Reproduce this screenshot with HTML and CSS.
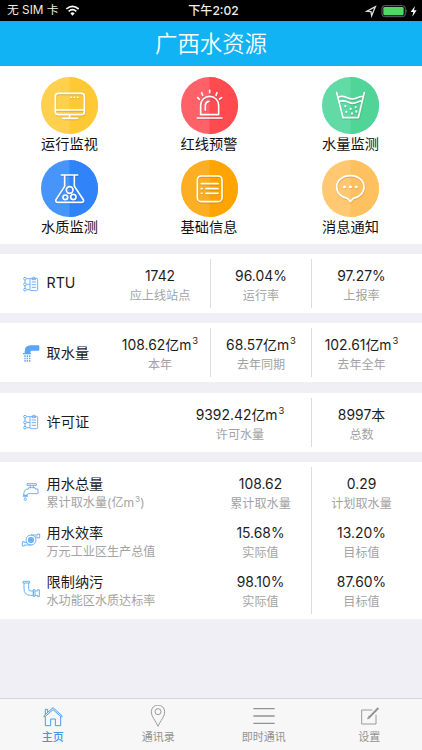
FILE: index.html
```html
<!DOCTYPE html>
<html lang="zh-CN">
<head>
<meta charset="utf-8">
<title>广西水资源</title>
<link rel="stylesheet" href="styles.css">
</head>
<body>
<svg class="defs" width="0" height="0">
  <symbol id="board" viewBox="0 0 54 54">
    <rect x="24" y="10" width="23" height="37" rx="3"/>
    <path d="M30 10q5-8 11 0v4H30zM29 21h13M29 29h13M29 37h13M14 11h10M14 28h10M14 44h10M9 15v9M9 32v8"/>
    <circle cx="9" cy="11" r="4"/><circle cx="9" cy="28" r="4"/><circle cx="9" cy="44" r="4"/>
  </symbol>
</svg>
<header class="status">
  <span class="carrier">无 SIM 卡
    <svg class="wifi" viewBox="0 0 45 33"><path d="M4 12Q22 -4 41 12M11 19Q22 9 34 19" /><path class="solid" d="M16 25Q22 19 29 25L22.500 32z"/></svg>
  </span>
  <span class="time">下午2:02</span>
  <span class="power">
    <svg viewBox="0 0 160 42"><path class="arrow" d="M5 22L31 8L20 35L18 23z"/><rect class="shell" x="51" y="5" width="70" height="33" rx="8"/><rect class="charge" x="55" y="9" width="61" height="25" rx="4"/><path class="tip" d="M124 16q5 5 0 11z"/><path class="bolt" d="M150 6L137 24h8l-3 14 13-19h-8z"/></svg>
  </span>
</header>
<h1 class="title">广西水资源</h1>

<nav class="menu">
  <a class="item"><svg class="disc yellow" viewBox="0 0 171 171"><circle cx="85.500" cy="85.500" r="85.500"/><path class="half" d="M85.500 0a85.500 85.500 0 0 1 0 171z"/>
    <g class="line"><rect x="43" y="49" width="87" height="64" rx="9"/><path d="M43 99h87M86 113v11M65 124h44"/><path class="dots" d="M90 61h1M100 61h1M110 61h1"/></g></svg>运行监视</a>
  <a class="item"><svg class="disc red" viewBox="0 0 171 171"><circle cx="85.500" cy="85.500" r="85.500"/><path class="half" d="M85.500 0a85.500 85.500 0 0 1 0 171z"/>
    <g class="line"><path d="M59 113V85a27 27 0 0 1 54 0v28zM49 123h74M50 62l5 5M62 47l3 8M86 40v7M108 47l-3 8M122 62l-6 4"/><path d="M73 100V86q0-11 11-13"/></g></svg>红线预警</a>
  <a class="item"><svg class="disc green" viewBox="0 0 171 171"><circle cx="85.500" cy="85.500" r="85.500"/><path class="half" d="M85.500 0a85.500 85.500 0 0 1 0 171z"/>
    <g class="line"><path d="M44 47l19 75h46l18-75M48 61c19-10 25 5 43 5 16 0 20-10 32-7M51 74c17-8 25 3 39 5 14 1 20-8 29-7"/><path class="thin" d="M70 87v1M86 95v1M101 90v1M73 104v1M90 109v1M103 103v1"/></g></svg>水量监测</a>
  <a class="item"><svg class="disc blue" viewBox="0 0 171 171"><circle cx="85.500" cy="85.500" r="85.500"/><path class="half" d="M85.500 0a85.500 85.500 0 0 1 0 171z"/>
    <g class="line"><path d="M61 45h49M71 47v32L45 119q-3 8 6 8h70q9 0 6-8L100 79V47"/><circle cx="86" cy="90" r="10"/><circle cx="73" cy="112" r="7"/><circle cx="97" cy="111" r="8"/></g></svg>水质监测</a>
  <a class="item"><svg class="disc orange" viewBox="0 0 171 171"><circle cx="85.500" cy="85.500" r="85.500"/><path class="half" d="M85.500 0a85.500 85.500 0 0 1 0 171z"/>
    <g class="line"><rect x="49" y="48" width="74" height="77" rx="12"/><path d="M61 71h50M75 86h36M75 100h36M61 86h2M61 100h2"/></g></svg>基础信息</a>
  <a class="item"><svg class="disc peach" viewBox="0 0 171 171"><circle cx="85.500" cy="85.500" r="85.500"/><path class="half" d="M85.500 0a85.500 85.500 0 0 1 0 171z"/>
    <g class="line"><path d="M76 115C57 112 44 98 44 81c0-19 18-34 41-34s41 15 41 34c0 17-13 31-32 34l-9 10z"/><path class="bold" d="M67 81h1M85 81h1M102 81h1"/></g></svg>消息通知</a>
</nav>

<main class="cards">
  <section class="card">
    <div class="row three">
      <div class="name"><svg><use href="#board"/></svg><b>RTU</b></div>
      <div class="cell"><b>1742</b><i>应上线站点</i></div>
      <div class="cell"><b>96.04%</b><i>运行率</i></div>
      <div class="cell"><b>97.27%</b><i>上报率</i></div>
    </div>
  </section>
  <section class="card">
    <div class="row three">
      <div class="name"><svg viewBox="0 0 54 54"><path class="fill" d="M8 23q0-19 19-19h23q2 0 2 2v12q0 2-3 2H29q-4 0-4 4v3h2v4H3v-4h5z"/><path class="drops" d="M9 34v20M16 34v20M23 34v20"/></svg><b>取水量</b></div>
      <div class="cell"><b>108.62亿m<sup>3</sup></b><i>本年</i></div>
      <div class="cell"><b>68.57亿m<sup>3</sup></b><i>去年同期</i></div>
      <div class="cell"><b>102.61亿m<sup>3</sup></b><i>去年全年</i></div>
    </div>
  </section>
  <section class="card">
    <div class="row two">
      <div class="name"><svg><use href="#board"/></svg><b>许可证</b></div>
      <div class="cell"><b>9392.42亿m<sup>3</sup></b><i>许可水量</i></div>
      <div class="cell"><b>8997本</b><i>总数</i></div>
    </div>
  </section>
  <section class="card">
    <div class="row two wide">
      <div class="name"><svg viewBox="0 0 54 54"><path d="M15 5h28v5H15zM25 10v7M34 10v7M20 17h19v4h9v14H25q-9-2-10 5H5q0-20 15-19zM4 40h12v4H4zM10 47q-7 8 0 8t0-8"/></svg><span><b>用水总量</b><i>累计取水量(亿m<sup>3</sup>)</i></span></div>
      <div class="cell"><b>108.62</b><i>累计取水量</i></div>
      <div class="cell"><b>0.29</b><i>计划取水量</i></div>
    </div>
    <div class="row two wide">
      <div class="name"><svg viewBox="0 0 54 54"><circle cx="27" cy="27" r="15"/><circle class="hub" cx="27" cy="27" r="8"/><path d="M20 21l14 12M34 21L20 33M27 18v18M18 27h18M27 12h20V9h6v12h-6v-3h-8M27 42H7v3H1V32h6v3h9"/></svg><span><b>用水效率</b><i>万元工业区生产总值</i></span></div>
      <div class="cell"><b>15.68%</b><i>实际值</i></div>
      <div class="cell"><b>13.20%</b><i>目标值</i></div>
    </div>
    <div class="row two wide">
      <div class="name"><svg viewBox="0 0 54 54"><path d="M3 4h20v5H3zM6 9v17q0 20 20 20h8V33h-7q-7 0-7-7V9M34 29h5v20h-5zM39 33h8v-4h5v21h-5v-4h-8"/></svg><span><b>限制纳污</b><i>水功能区水质达标率</i></span></div>
      <div class="cell"><b>98.10%</b><i>实际值</i></div>
      <div class="cell"><b>87.60%</b><i>目标值</i></div>
    </div>
  </section>
</main>

<footer class="tabs">
  <a class="tab active"><svg viewBox="0 0 66 66"><path d="M5 33L33 8L61 33L58 36L33 14L8 36zM10 35v27h16V42h14v20h16V35M10 28V13h7v9"/></svg>主页</a>
  <a class="tab"><svg viewBox="0 0 66 66"><path d="M33 64C25 46 13 35 13 20a20 20 0 0 1 40 0C53 35 41 46 33 64z"/><circle cx="33" cy="20" r="9"/></svg>通讯录</a>
  <a class="tab"><svg viewBox="0 0 66 66"><path class="bars" d="M1 11h64M1 33h64M1 55h64"/></svg>即时通讯</a>
  <a class="tab"><svg viewBox="0 0 66 66"><path d="M43 15H11v42h43V29"/><path class="pen" d="M33 38L61 9"/><path d="M29 42l3-8 4 4z"/></svg>设置</a>
</footer>
</body>
</html>
```
FILE: styles.css
```css
* { box-sizing: border-box; }
body {
  margin: 0;
  width: 422px;
  height: 750px;
  overflow: hidden;
  display: flex;
  flex-direction: column;
  background: #efeff5;
  color: #1c1c1c;
  font-family: Inter, "Noto Sans CJK SC", sans-serif;
}
svg { display: block; fill: none; flex: none; }
b, i { font-weight: 400; font-style: normal; display: block; white-space: nowrap; }
.defs { position: absolute; }

.status {
  height: 20.5px;
  flex: none;
  padding: 0 4px 0 7px;
  background: #000;
  color: #eee;
  font-size: 12px;
  line-height: 21px;
  display: grid;
  grid-template-columns: 1fr auto 1fr;
  align-items: center;
}
.carrier { display: flex; align-items: center; gap: 6px; font-size: 11.8px; }
.wifi { width: 15px; height: 11px; stroke: #fff; stroke-width: 5; }
.wifi .solid { fill: #fff; stroke: none; }
.time { font-weight: 500; font-size: 12.1px; padding-left: 2px; }
.power { justify-self: end; }
.power svg { width: 53.3px; height: 14px; }
.arrow { stroke: #ddd; stroke-width: 4; }
.shell { stroke: #666; stroke-width: 3; }
.charge { fill: #4cd964; }
.tip { fill: #666; }
.bolt { fill: #fff; }

.title {
  margin: 0;
  height: 45.5px;
  flex: none;
  background: #12b3f5;
  color: #fff;
  font-size: 22.4px;
  font-weight: 350;
  line-height: 45px;
  text-align: center;
}

.menu {
  height: 178px;
  flex: none;
  background: #fff;
  padding-top: 10.5px;
  display: grid;
  grid-template-columns: 139px 140px 143px;
  grid-auto-rows: 83.5px;
}
.item {
  display: flex;
  flex-direction: column;
  align-items: center;
  font-size: 14.2px;
  line-height: 20px;
  color: #111;
}
.disc { width: 57px; height: 57px; }
.yellow { fill: #ffd04d; } .yellow .half { fill: #ffc935; }
.red { fill: #ff6168; } .red .half { fill: #ff4a50; }
.green { fill: #61daa6; } .green .half { fill: #50d497; }
.blue { fill: #4794fb; } .blue .half { fill: #3083f8; }
.orange { fill: #fdae22; } .orange .half { fill: #ffa400; }
.peach { fill: #ffc871; } .peach .half { fill: #ffc15f; }
.line {
  fill: none;
  stroke: #fff;
  stroke-width: 5;
  stroke-linecap: round;
  stroke-linejoin: round;
  filter: drop-shadow(1px 3px 2px rgba(0, 0, 0, .15));
}
.line .dots { stroke-width: 5; }
.line .thin { stroke-width: 6; }
.line .bold { stroke-width: 8; }

.cards { margin-top: 10px; display: flex; flex-direction: column; gap: 10.3px; }
.card { background: #fff; padding: 5px 0; }
.row { height: 49px; display: grid; }
.three { grid-template-columns: 110px 100px 101px 100px; }
.two { grid-template-columns: 169px 142px 100px; }
.wide { grid-template-columns: 210px 101px 100px; }
.name {
  display: flex;
  align-items: center;
  gap: 6.500px;
  padding-left: 22px;
  font-size: 14.2px;
}
.name > b { padding-bottom: 2px; }
.name svg { width: 18px; height: 18px; overflow: visible; stroke: #66aaf5; stroke-width: 2.8; }
.name .fill { fill: #59a5fa; stroke: none; }
.name .hub { fill: #9cc8fa; }
.name .drops { stroke: #59a5fa; stroke-width: 4; stroke-dasharray: 5 2; }
.name span { padding-top: 3px; }
.cell { padding-top: 8px; text-align: center; }
.cell + .cell { border-left: 1px solid #dcdce0; }
.cell b { font-size: 13.9px; line-height: 19px; }
.name span b { font-size: 14.2px; line-height: 19px; }
.cell i, .name i { font-size: 12.1px; line-height: 19px; color: #a3a3a3; }
sup { font-size: .68em; line-height: 0; vertical-align: .62em; margin-left: 1px; }

.tabs {
  margin-top: auto;
  height: 52px;
  flex: none;
  background: #f7f7f7;
  border-top: 1px solid #d4d4da;
  display: grid;
  grid-template-columns: repeat(4, 1fr);
}
.tab {
  display: flex;
  flex-direction: column;
  align-items: center;
  padding-top: 6px;
  font-size: 11px;
  line-height: 20px;
  color: #929292;
}
.tab svg { width: 22px; height: 22px; stroke: currentColor; stroke-width: 2.800; }
.tab .bars { stroke-width: 4; }
.tab .pen { stroke-width: 6; }
.active { color: #3d97e8; font-weight: 500; }
```
